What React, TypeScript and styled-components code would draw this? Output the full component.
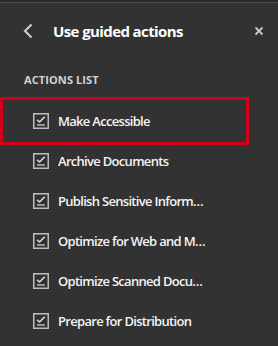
import styled, { createGlobalStyle } from "styled-components";

const GlobalStyle = createGlobalStyle`
  html, body {
    margin: 0;
    padding: 0;
    background-color: #323232;
  }
  * {
    box-sizing: border-box;
  }
`;

const Panel = styled.div`
  width: 278px;
  height: 346px;
  background-color: #323232;
  border-top: 2px solid #2a2a2a;
  font-family: "Open Sans", "Noto Sans", sans-serif;
  color: #f2f2f2;
  overflow: hidden;
`;

const Header = styled.div`
  display: flex;
  align-items: center;
  height: 57px;
  border-top: 1px solid #4a4a4a;
  padding: 0 14px 0 22px;
`;

const IconButton = styled.button`
  display: flex;
  align-items: center;
  justify-content: center;
  padding: 0;
  border: none;
  background: none;
  color: #c9c9c9;
  cursor: pointer;
`;

const Title = styled.h1`
  flex: 1;
  margin: 0 0 0 19px;
  font-size: 15px;
  font-weight: 700;
  letter-spacing: -0.6px;
  color: #ffffff;
`;

const SectionLabel = styled.div`
  margin: 13px 0 13px 24px;
  height: 16px;
  line-height: 16px;
  font-size: 11px;
  font-weight: 700;
  letter-spacing: 0.1px;
  color: #d2d2d2;
`;

const List = styled.ul`
  list-style: none;
  margin: 0 0 0 4px;
  padding: 0;
  width: 241px;
`;

const Row = styled.li<{ $active?: boolean }>`
  display: flex;
  align-items: center;
  gap: 9px;
  height: 40px;
  padding-left: 29px;
  cursor: pointer;
  outline: ${(p) => (p.$active ? "3px solid #d4001a" : "none")};
  outline-offset: 1px;
`;

const Label = styled.span`
  flex: 1;
  min-width: 0;
  font-size: 13px;
  font-weight: 600;
  letter-spacing: -0.7px;
  white-space: nowrap;
  overflow: hidden;
  text-overflow: ellipsis;
  padding-right: 38px;
  color: #f4f4f4;
`;

const actions = [
  "Make Accessible",
  "Archive Documents",
  "Publish Sensitive Information",
  "Optimize for Web and Mobile",
  "Optimize Scanned Documents",
  "Prepare for Distribution",
];

function ActionIcon() {
  return (
    <svg width="16" height="16" viewBox="0 0 16 16" fill="none">
      <rect x="0.75" y="0.75" width="14.5" height="14.5" stroke="#bdbdbd" strokeWidth="1.5" />
      <path d="M4.2 6.8 L6.6 9 L11.6 3.9" stroke="#d8d8d8" strokeWidth="1.6" />
      <path d="M4 12 H12" stroke="#bdbdbd" strokeWidth="1.4" />
    </svg>
  );
}

function App() {
  return (
    <>
      <GlobalStyle />
      <Panel>
        <Header>
          <IconButton aria-label="Back">
            <svg width="12" height="16" viewBox="0 0 12 16" fill="none">
              <path d="M9.5 1.5 L3 8 L9.5 14.5" stroke="currentColor" strokeWidth="2.2" />
            </svg>
          </IconButton>
          <Title>Use guided actions</Title>
          <IconButton aria-label="Close">
            <svg width="10" height="10" viewBox="0 0 10 10" fill="none">
              <path d="M1.5 1.5 L8.5 8.5 M8.5 1.5 L1.5 8.5" stroke="currentColor" strokeWidth="1.8" />
            </svg>
          </IconButton>
        </Header>
        <SectionLabel>ACTIONS LIST</SectionLabel>
        <List>
          {actions.map((name, i) => (
            <Row key={name} $active={i === 0}>
              <ActionIcon />
              <Label>{name}</Label>
            </Row>
          ))}
        </List>
      </Panel>
    </>
  );
}

export default App;
